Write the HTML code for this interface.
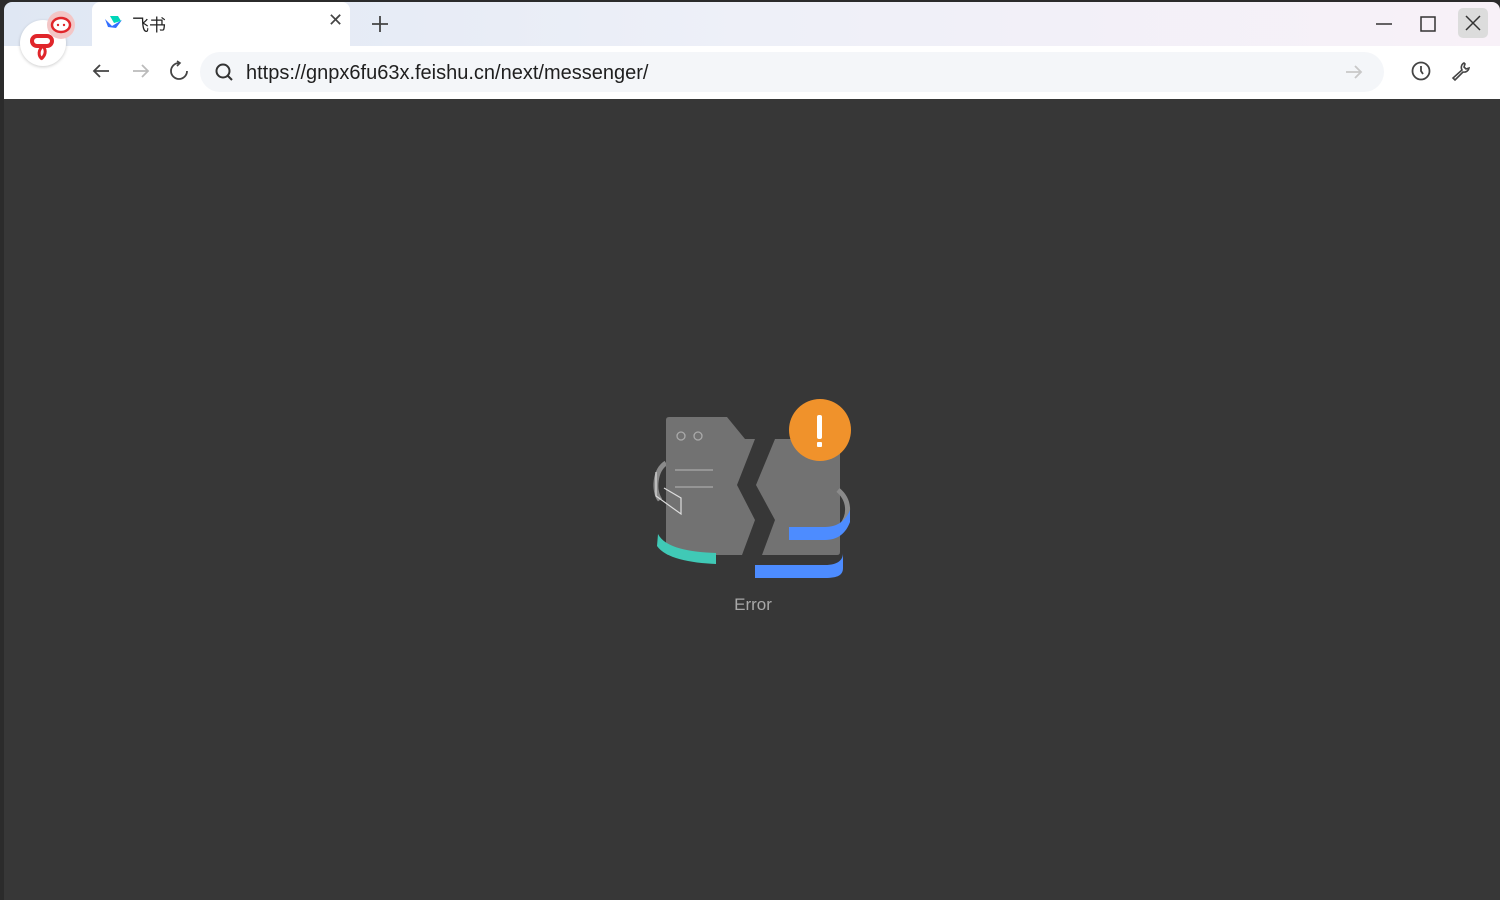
<!DOCTYPE html>
<html><head><meta charset="utf-8"><style>
body{margin:0;width:1500px;height:900px;overflow:hidden;background:#2b2b2b;font-family:"Liberation Sans","Noto Sans CJK SC",sans-serif}
.win{position:absolute;left:4px;top:2px;width:1496px;height:898px;background:#373737;border-radius:8px 8px 0 0;overflow:hidden}
.tabs{position:absolute;left:0;top:0;right:0;height:44px;background:linear-gradient(90deg,#dfe7f3,#eef0f8 50%,#f8f1f8)}
.tab{position:absolute;left:88px;top:0;width:258px;height:44px;background:#fff;border-radius:8px 8px 0 0}
.bar{position:absolute;left:0;top:44px;right:0;height:53px;background:#fff}
.url{position:absolute;left:196px;top:6px;width:1184px;height:40px;border-radius:20px;background:#f4f6f9}
.url span{position:absolute;left:46px;top:10px;font-size:20px;color:#1f1f1f}
svg{position:absolute}
</style></head><body>
<div class="win">
<div class="tabs"></div>
<div class="tab"><span style="position:absolute;left:40px;top:9px;font-size:17px;color:#222">飞书</span><span style="position:absolute;left:236px;top:8px;font-size:18px;color:#444">✕</span></div>
<svg style="left:100px;top:12px" width="20" height="16" viewBox="0 0 20 16"><path d="M1 5 L8 12 L18 6 L12 14 L4 13Z" fill="#3370ff"/><path d="M6 2 L14 2 L17 7 L10 9Z" fill="#00d6b9"/></svg>
<svg style="left:366px;top:12px" width="20" height="20"><path d="M10 2V18M2 10H18" stroke="#444" stroke-width="1.8"/></svg>
<svg style="left:1370px;top:12px" width="20" height="20"><path d="M2 10H18" stroke="#333" stroke-width="1.5"/></svg>
<svg style="left:1414px;top:12px" width="20" height="20"><rect x="3" y="3" width="14" height="14" fill="none" stroke="#333" stroke-width="1.5"/></svg>
<div style="position:absolute;left:1454px;top:6px;width:30px;height:30px;background:#dcdcdc;border-radius:5px"></div>
<svg style="left:1459px;top:11px" width="20" height="20"><path d="M3 3L17 17M17 3L3 17" stroke="#333" stroke-width="1.5"/></svg>
<div class="bar"><div class="url"><span>https://gnpx6fu63x.feishu.cn/next/messenger/</span></div></div>
<div style="position:absolute;left:16px;top:18px;width:46px;height:46px;border-radius:50%;background:#fff;box-shadow:0 1px 3px rgba(0,0,0,.2)"></div>
<svg style="left:22px;top:24px" width="36" height="36"><rect x="6" y="10" width="20" height="10" rx="5" fill="none" stroke="#e0262b" stroke-width="4"/><path d="M17 20 C12 24 12 30 16 33 M17 20 C21 25 19 30 15 33" fill="none" stroke="#e0262b" stroke-width="3"/></svg>
<div style="position:absolute;left:43px;top:9px;width:28px;height:28px;border-radius:50%;background:#f3c6c6"></div>
<svg style="left:43px;top:9px" width="28" height="28"><ellipse cx="14" cy="14" rx="9" ry="7" fill="#fff" stroke="#e0262b" stroke-width="2.5"/><circle cx="11" cy="14" r="1.2" fill="#e0262b"/><circle cx="17" cy="14" r="1.2" fill="#e0262b"/></svg>
<svg style="left:86px;top:58px" width="22" height="22"><path d="M19 11H4M10 5L4 11L10 17" fill="none" stroke="#444" stroke-width="1.8"/></svg>
<svg style="left:126px;top:58px" width="22" height="22"><path d="M3 11H18M12 5L18 11L12 17" fill="none" stroke="#bbb" stroke-width="1.8"/></svg>
<svg style="left:164px;top:58px" width="22" height="22"><path d="M11 3A8 8 0 1 0 19 11" fill="none" stroke="#444" stroke-width="1.8"/><path d="M9 1L12 3L9 6" fill="none" stroke="#444" stroke-width="1.6"/></svg>
<svg style="left:210px;top:59px" width="22" height="22"><circle cx="9" cy="10" r="6.5" fill="none" stroke="#333" stroke-width="2"/><path d="M14 15L18 19" stroke="#333" stroke-width="2"/></svg>
<svg style="left:1340px;top:60px" width="20" height="20"><path d="M2 10H17M11 4L17 10L11 16" fill="none" stroke="#c8c8c8" stroke-width="1.8"/></svg>
<svg style="left:1406px;top:58px" width="22" height="22"><circle cx="11" cy="11" r="8.5" fill="none" stroke="#444" stroke-width="1.8"/><path d="M11 6V11L13 14" fill="none" stroke="#444" stroke-width="1.8"/></svg>
<svg style="left:1446px;top:58px" width="22" height="22"><path d="M14 3A5 5 0 0 0 12 10L3 18L5 20L13 12A5 5 0 0 0 19 8L16 9L14 7L15 4Z" fill="none" stroke="#444" stroke-width="1.6"/></svg>
</div>
<svg style="left:0;top:0" width="1500" height="900" viewBox="0 0 1500 900">
<path d="M666 463 C655 470 653 490 660 500" fill="none" stroke="#8a8a8a" stroke-width="5"/>
<path d="M669 417 H727 L745 439 H755 L737 485 L755 520 L742 555 H669 Q666 555 666 552 V420 Q666 417 669 417Z" fill="#727272"/>
<path d="M775 439 H837 Q840 439 840 442 V552 Q840 555 837 555 H762 L775 520 L756 485Z" fill="#727272"/>
<path d="M838 490 C850 500 850 515 842 525" fill="none" stroke="#8a8a8a" stroke-width="5"/>
<circle cx="681" cy="436" r="4" fill="none" stroke="#aaa" stroke-width="1.3"/><circle cx="698" cy="436" r="4" fill="none" stroke="#aaa" stroke-width="1.3"/>
<path d="M675 470H713M675 487H713" stroke="#aaa" stroke-width="1.3"/>
<path d="M656 472 V496 L681 514 V498 L664 488" fill="none" stroke="#ddd" stroke-width="1.2"/>
<path d="M658 534 C665 548 690 552 716 553 V564 C690 563 665 558 657 546Z" fill="#40c9b6"/>
<path d="M789 527 H825 C838 527 846 520 850 510 V522 C846 533 838 540 825 540 H789Z" fill="#4d8cff"/>
<path d="M755 565 H825 C838 565 843 560 843 553 V568 C843 575 838 578 825 578 H755Z" fill="#4d8cff"/>
<circle cx="820" cy="430" r="31" fill="#f0922b"/>
<rect x="817" y="415" width="5" height="24" rx="2" fill="#fff"/><rect x="817" y="442" width="5" height="5" rx="1" fill="#fff"/>
<text x="753" y="610" text-anchor="middle" font-size="17" fill="#a8a8a8" font-family="Liberation Sans,sans-serif">Error</text>
</svg>
</body></html>
